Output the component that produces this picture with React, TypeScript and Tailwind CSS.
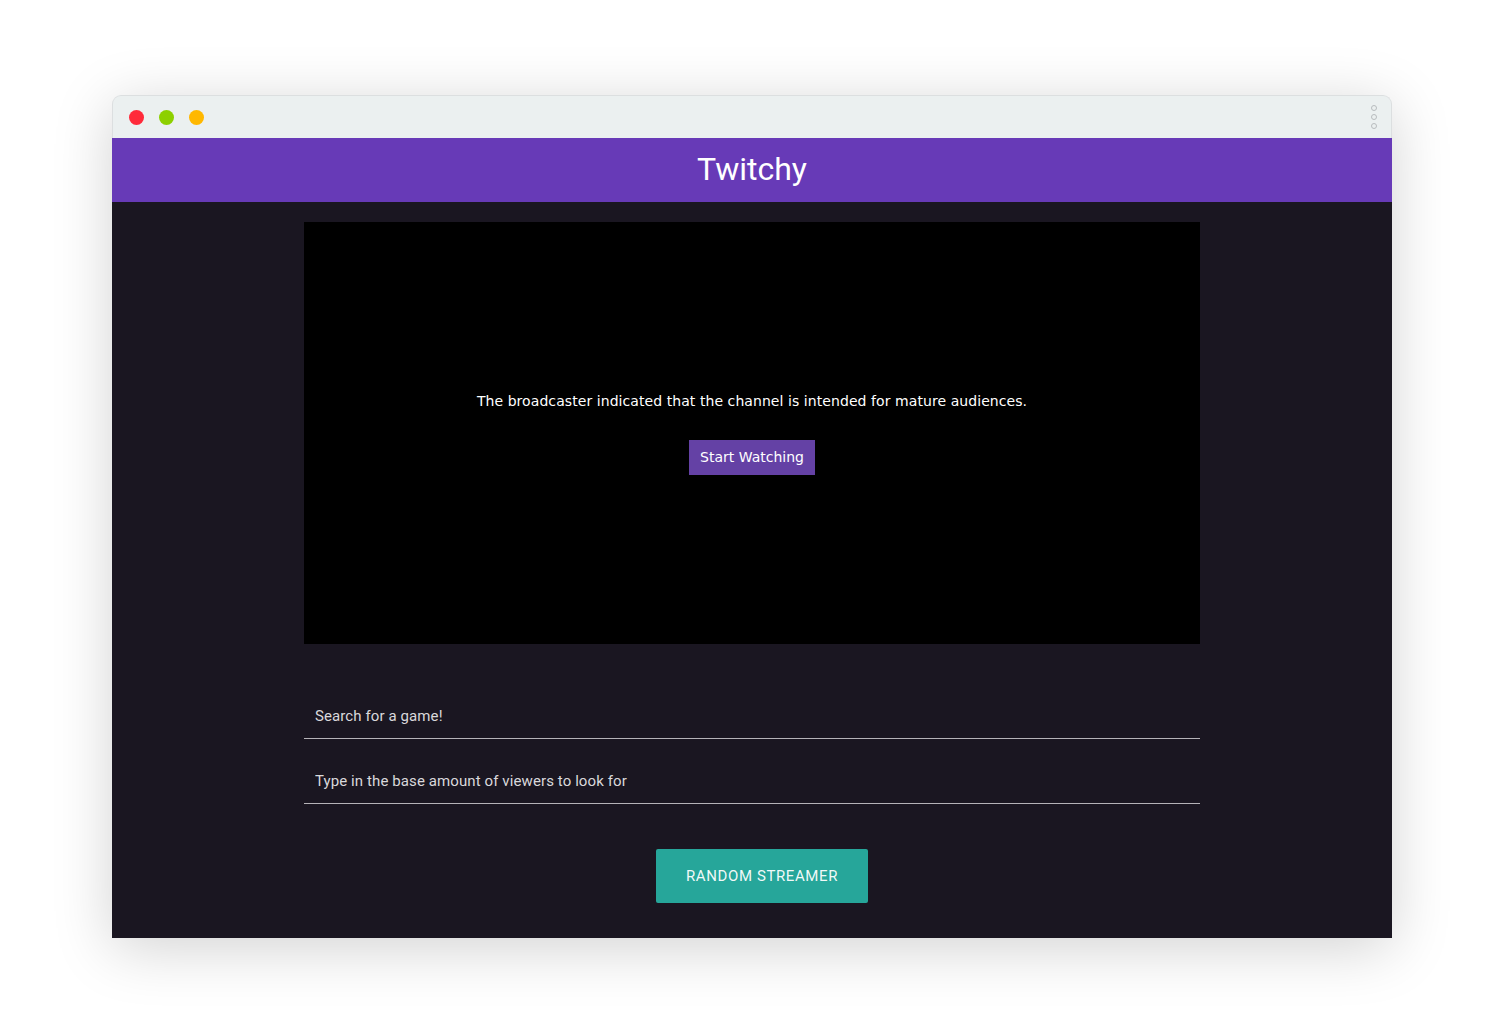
export default function App() {
  return (
    <div className="min-h-[1018px] w-[1504px] bg-white pl-[112px] pt-[95px]">
      <div className="w-[1280px] shadow-[0_10px_60px_rgba(0,0,0,0.18)] rounded-t-[9px]">
        <TitleBar />
        <header className="flex h-[64px] items-center justify-center bg-[#673ab7]">
          <h1 className="pb-[2px] font-['Roboto',sans-serif] text-[32px] font-normal text-white">Twitchy</h1>
        </header>
        <main className="bg-[#1a1621] px-[192px] pb-[35px] pt-[20px]">
          <Player />
          <div className="mt-[47px]">
            <TextInput placeholder="Search for a game!" />
            <div className="mt-[17px]">
              <TextInput placeholder="Type in the base amount of viewers to look for" />
            </div>
          </div>
          <div className="mt-[45px] pl-[352px]">
            <button className="h-[54px] w-[212px] rounded-[2px] bg-[#26a69a] font-['Roboto',sans-serif] text-[15px] tracking-[0.6px] text-white/95">
              RANDOM STREAMER
            </button>
          </div>
        </main>
      </div>
    </div>
  );
}

function TitleBar() {
  return (
    <div className="flex h-[43px] items-center justify-between rounded-t-[9px] border border-b-0 border-[#dcdfe0] bg-[#ebf0f0] pl-[16px] pr-[14px]">
      <div className="flex items-center gap-[15px]">
        <span className="h-[15px] w-[15px] rounded-full bg-[#ff2a3a]" />
        <span className="h-[15px] w-[15px] rounded-full bg-[#8dd000]" />
        <span className="h-[15px] w-[15px] rounded-full bg-[#ffb800]" />
      </div>
      <div className="flex flex-col gap-[3px]">
        <span className="h-[6px] w-[6px] rounded-full border border-[#b8bcbe]" />
        <span className="h-[6px] w-[6px] rounded-full border border-[#b8bcbe]" />
        <span className="h-[6px] w-[6px] rounded-full border border-[#b8bcbe]" />
      </div>
    </div>
  );
}

function Player() {
  return (
    <div className="flex h-[422px] w-[896px] flex-col items-center justify-center bg-black font-['DejaVu_Sans',sans-serif]">
      <p className="mt-[-1px] text-[14px] tracking-[0.07px] text-white">The broadcaster indicated that the channel is intended for mature audiences.</p>
      <button className="mt-[28px] h-[35px] bg-[#6441a5] px-[11px] text-[14px] text-white">Start Watching</button>
    </div>
  );
}

function TextInput({ placeholder }: { placeholder: string }) {
  return (
    <div className="flex h-[48px] items-end border-b border-[#b5b3b8] px-[11px] pb-[13px]">
      <input
        className="w-full bg-transparent font-['Roboto',sans-serif] text-[15px] leading-[18px] tracking-[0.1px] text-white outline-none placeholder:text-[#d9d8db]"
        placeholder={placeholder}
      />
    </div>
  );
}
